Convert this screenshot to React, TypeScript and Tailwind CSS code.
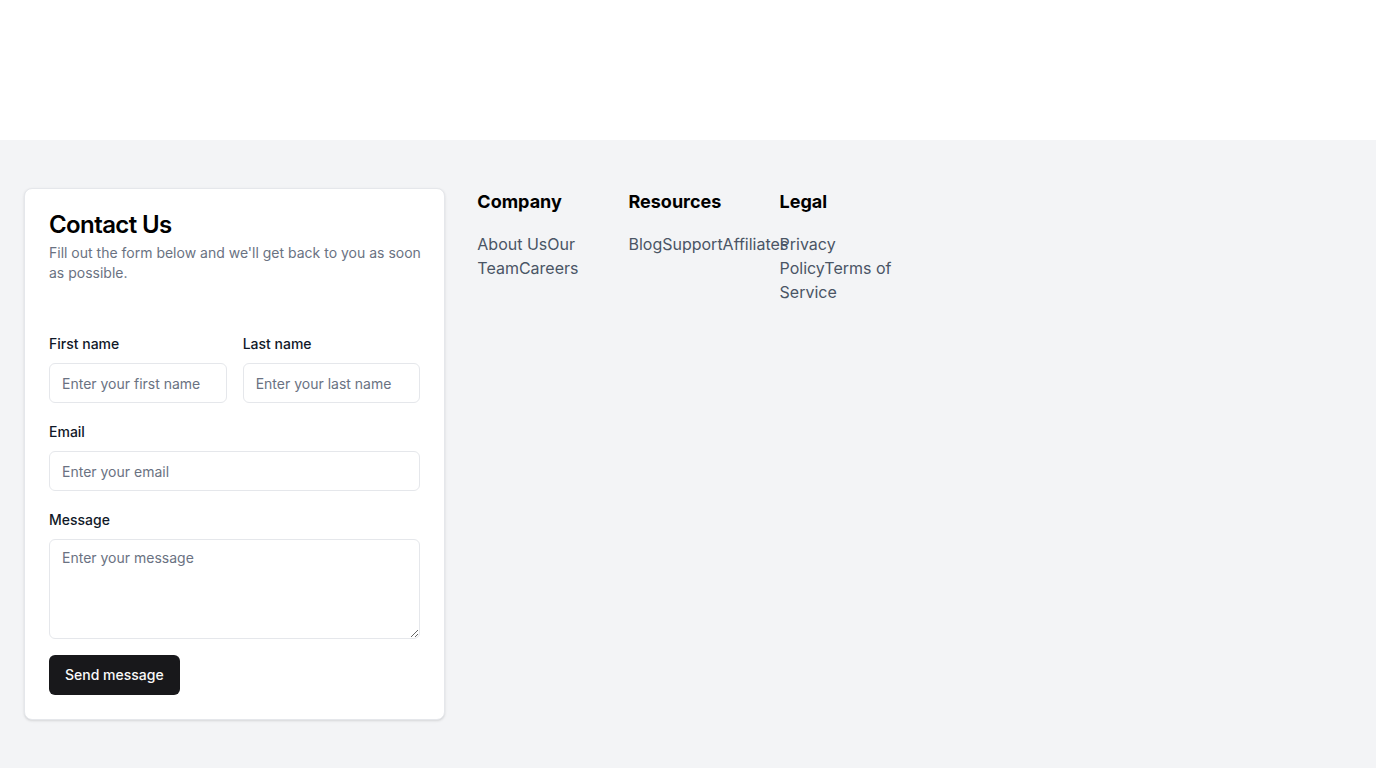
const footerLinks = [
  { title: "Company", links: ["About Us", "Our Team", "Careers"] },
  { title: "Resources", links: ["Blog", "Support", "Affiliates"] },
  { title: "Legal", links: ["Privacy Policy", "Terms of Service"] },
];

const inputCls =
  "h-10 w-full rounded-md border border-gray-200 bg-white px-3 text-sm text-gray-900 placeholder:text-gray-500 outline-none";

const labelCls = "mb-[9px] block text-sm leading-5 font-medium text-gray-900";

export default function App() {
  return (
    <div className="min-h-screen bg-white font-['Inter',sans-serif]">
      <div className="h-[140px] bg-white" />
      <footer className="bg-gray-100 px-6 pt-12 pb-12">
        <div className="grid grid-cols-3 gap-8">
          <div className="rounded-lg border border-gray-200 bg-white p-6 shadow-sm">
            <h2 className="text-2xl leading-none font-semibold tracking-tight text-black">
              Contact Us
            </h2>
            <p className="mt-1.5 -mr-2 text-sm leading-5 text-gray-500">
              Fill out the form below and we'll get back to you as soon as possible.
            </p>
            <form className="mt-[51px]" onSubmit={(e) => e.preventDefault()}>
              <div className="grid grid-cols-2 gap-4">
                <div>
                  <label className={labelCls}>First name</label>
                  <input className={inputCls} placeholder="Enter your first name" />
                </div>
                <div>
                  <label className={labelCls}>Last name</label>
                  <input className={inputCls} placeholder="Enter your last name" />
                </div>
              </div>
              <div className="mt-[19px]">
                <label className={labelCls}>Email</label>
                <input className={inputCls} placeholder="Enter your email" />
              </div>
              <div className="mt-[19px]">
                <label className={labelCls}>Message</label>
                <textarea
                  className="block h-[100px] w-full rounded-md border border-gray-200 bg-white px-3 py-2 text-sm leading-5 text-gray-900 placeholder:text-gray-500 outline-none"
                  placeholder="Enter your message"
                />
              </div>
              <button
                type="submit"
                className="mt-4 h-10 rounded-md bg-[#18181b] px-4 text-sm font-medium text-[#fafafa]"
              >
                Send message
              </button>
            </form>
          </div>
          <div className="grid grid-cols-3 content-start gap-8">
            {footerLinks.map((col) => (
              <div key={col.title}>
                <h3 className="text-lg leading-7 font-bold text-black">{col.title}</h3>
                <div className="mt-4 text-base leading-6 text-gray-600">
                  {col.links.map((l) => (
                    <a key={l} href="#" className="hover:text-gray-900">
                      {l}
                    </a>
                  ))}
                </div>
              </div>
            ))}
          </div>
        </div>
      </footer>
    </div>
  );
}
